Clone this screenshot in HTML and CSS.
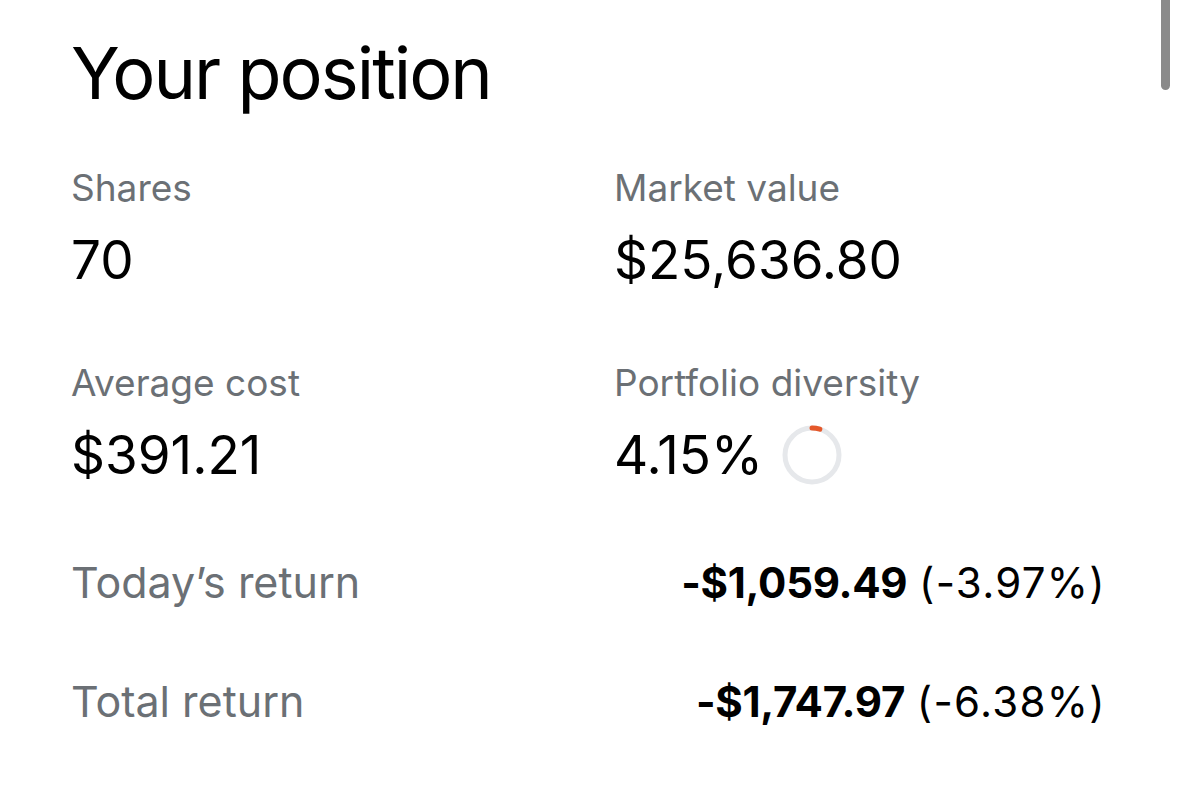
FILE: index.html
```html
<!DOCTYPE html>
<html lang="en">
<head>
<meta charset="utf-8">
<title>Your position</title>
<link rel="stylesheet" href="styles.css">
</head>
<body>
<div class="scrollbar"></div>
<main class="position">
  <h1 class="title">Your position</h1>
  <div class="stats">
    <div class="stat">
      <div class="label">Shares</div>
      <div class="value">70</div>
    </div>
    <div class="stat">
      <div class="label">Market value</div>
      <div class="value">$25,636.80</div>
    </div>
    <div class="stat">
      <div class="label">Average cost</div>
      <div class="value">$391.21</div>
    </div>
    <div class="stat">
      <div class="label">Portfolio diversity</div>
      <div class="value with-ring">4.15%
        <svg class="ring" width="62" height="62" viewBox="0 0 62 62">
          <circle cx="31" cy="31" r="27" fill="none" stroke="#e6e8eb" stroke-width="5"/>
          <circle cx="31" cy="31" r="27" fill="none" stroke="#e5582a" stroke-width="5" stroke-linecap="round" stroke-dasharray="8 200" transform="rotate(-90 31 31)"/>
        </svg>
      </div>
    </div>
  </div>
  <div class="ret-row first">
    <div class="ret-label">Today’s return</div>
    <div class="ret-value"><b>-$1,059.49</b> <span class="pct">(-3.97%)</span></div>
  </div>
  <div class="ret-row">
    <div class="ret-label">Total return</div>
    <div class="ret-value"><b>-$1,747.97</b> <span class="pct">(-6.38%)</span></div>
  </div>
</main>
</body>
</html>
```
FILE: styles.css
```css
html, body {
  margin: 0;
  padding: 0;
  background: #ffffff;
}
body {
  font-family: Inter, "Noto Sans", "Liberation Sans", sans-serif;
  color: #000000;
  width: 1179px;
  height: 800px;
  overflow: hidden;
  position: relative;
}
.scrollbar {
  position: absolute;
  top: -6px;
  left: 1161px;
  width: 9px;
  height: 96px;
  border-radius: 5px;
  background: #8a8a8a;
}
.position {
  padding: 28px 73px 0 71px;
}
.title {
  margin: 0;
  font-size: 72px;
  font-weight: 400;
  line-height: 90px;
  letter-spacing: -2px;
}
.stats {
  display: grid;
  grid-template-columns: 543px 1fr;
  row-gap: 73px;
  margin-top: 50px;
}
.label {
  font-size: 37px;
  line-height: 40px;
  color: #6b7075;
  margin-bottom: 22px;
}
.value {
  font-size: 53px;
  line-height: 60px;
  height: 60px;
}
.with-ring {
  display: flex;
  align-items: center;
  gap: 18px;
}
.ring {
  display: block;
}
.ret-row {
  display: flex;
  justify-content: space-between;
  align-items: baseline;
  margin-top: 68px;
}
.ret-row.first {
  margin-top: 72px;
}
.ret-label {
  font-size: 43px;
  line-height: 50px;
  color: #6b7075;
}
.ret-value {
  font-size: 42px;
  line-height: 50px;
}
.ret-value b {
  font-weight: 700;
  letter-spacing: -0.3px;
}
.pct {
  letter-spacing: 1.3px;
}
```
